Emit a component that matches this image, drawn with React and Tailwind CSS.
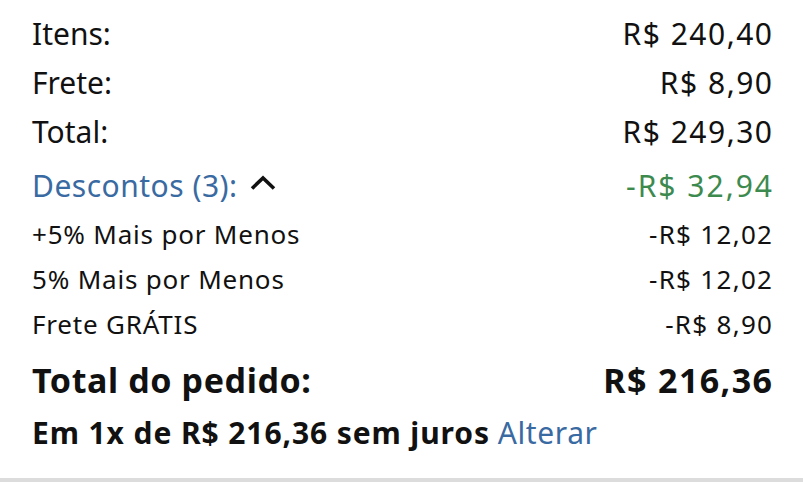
import React from "react";

const font = { fontFamily: '"Noto Sans", "Open Sans", Arial, sans-serif' };

function Row({ label, value, labelClass = "", valueClass = "" }) {
  return (
    <div className="flex justify-between items-center">
      <span className={labelClass}>{label}</span>
      <span className={valueClass}>{value}</span>
    </div>
  );
}

export default function App() {
  return (
    <div className="w-[803px] h-[500px] bg-white text-[#111111] overflow-hidden" style={font}>
      <div className="pl-8 pr-[31px] pt-[9px]">
        <div className="text-[30px] leading-[49px]">
          <Row label="Itens:" value="R$ 240,40" valueClass="tracking-[1.5px] -mr-[1.5px]" />
          <Row label="Frete:" value="R$ 8,90" valueClass="tracking-[1.5px] -mr-[1.5px]" />
          <Row label="Total:" value="R$ 249,30" valueClass="tracking-[1.5px] -mr-[1.5px]" />
          <div className="flex justify-between items-center mt-[5px]">
            <span className="flex items-center text-[#3a6aa2] tracking-[0.5px]">
              Descontos (3):
              <svg className="ml-[11px] mb-[6px]" width="28" height="16" viewBox="0 0 28 16" fill="none">
                <path d="M3 13.5 L14 3 L25 13.5" stroke="#111" strokeWidth="3.6" strokeLinecap="butt" strokeLinejoin="miter" />
              </svg>
            </span>
            <span className="text-[#3d8a4e] tracking-[2px] -mr-[2px]">-R$ 32,94</span>
          </div>
        </div>
        <div className="text-[26px] leading-[45px] mt-[2px]">
          <Row label="+5% Mais por Menos" value="-R$ 12,02" labelClass="tracking-[0.8px]" valueClass="tracking-[1.3px] -mr-[1.3px]" />
          <Row label="5% Mais por Menos" value="-R$ 12,02" labelClass="tracking-[0.8px]" valueClass="tracking-[1.3px] -mr-[1.3px]" />
          <Row label="Frete GRÁTIS" value="-R$ 8,90" labelClass="tracking-[0.8px]" valueClass="tracking-[1.3px] -mr-[1.3px]" />
        </div>
        <div className="flex justify-between items-center text-[34px] leading-[48px] font-bold mt-[9px]">
          <span className="tracking-[0.6px]">Total do pedido:</span>
          <span className="tracking-[1.4px] -mr-[1.4px]">R$ 216,36</span>
        </div>
        <div className="text-[30px] leading-[40px] mt-[9px]">
          <span className="font-bold tracking-[0.9px]">Em 1x de R$ 216,36 sem juros</span>{" "}
          <span className="text-[#3a6aa2] tracking-[0.6px]">Alterar</span>
        </div>
      </div>
      <div className="mt-[25px] h-[4px] bg-[#dcdcdc]" />
    </div>
  );
}
